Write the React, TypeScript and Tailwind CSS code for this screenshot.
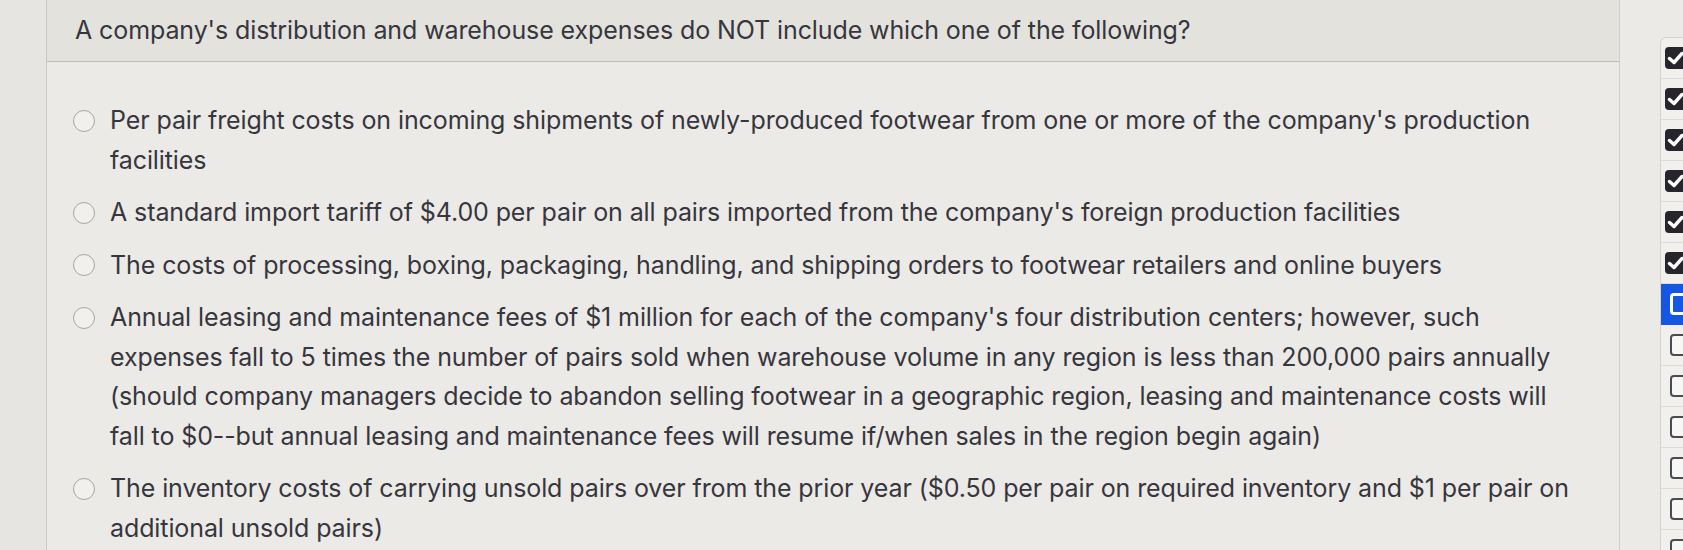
import React from "react";

const options: string[][] = [
  [
    "Per pair freight costs on incoming shipments of newly-produced footwear from one or more of the company's production",
    "facilities",
  ],
  [
    "A standard import tariff of $4.00 per pair on all pairs imported from the company's foreign production facilities",
  ],
  [
    "The costs of processing, boxing, packaging, handling, and shipping orders to footwear retailers and online buyers",
  ],
  [
    "Annual leasing and maintenance fees of $1 million for each of the company's four distribution centers; however, such",
    "expenses fall to 5 times the number of pairs sold when warehouse volume in any region is less than 200,000 pairs annually",
    "(should company managers decide to abandon selling footwear in a geographic region, leasing and maintenance costs will",
    "fall to $0--but annual leasing and maintenance fees will resume if/when sales in the region begin again)",
  ],
  [
    "The inventory costs of carrying unsold pairs over from the prior year ($0.50 per pair on required inventory and $1 per pair on",
    "additional unsold pairs)",
  ],
];

type Status = "done" | "current" | "todo";
const rows: Status[] = [
  "done",
  "done",
  "done",
  "done",
  "done",
  "done",
  "current",
  "todo",
  "todo",
  "todo",
  "todo",
  "todo",
  "todo",
];

function Check() {
  return (
    <svg width="22" height="22" viewBox="0 0 22 22" className="block">
      <rect x="0" y="0" width="22" height="22" rx="4" fill="#26252b" />
      <polyline
        points="4.5,11.5 9,15.5 17,6.5"
        fill="none"
        stroke="#ffffff"
        strokeWidth="3.4"
        strokeLinecap="round"
        strokeLinejoin="round"
      />
    </svg>
  );
}

export default function App() {
  return (
    <div className="w-[1683px] h-[550px] overflow-hidden flex bg-[#ebeae6] text-[#37363e] font-['Inter','Liberation_Sans',sans-serif]">
      <div className="w-[47px] shrink-0 bg-[#e6e5e1] border-r border-[#c9c8c4]" />
      <div className="w-[1573px] shrink-0 flex flex-col border-r border-[#cfceca]">
        <div className="h-[62px] shrink-0 bg-[#e3e2dd] border-b border-[#bebdb8] pl-[28px] flex items-center">
          <span className="text-[25px] tracking-[-0.1px] whitespace-nowrap">
            A company's distribution and warehouse expenses do NOT include which one of the following?
          </span>
        </div>
        <div className="pt-[39px] pl-[26px] flex flex-col gap-[13px]">
          {options.map((lines, i) => (
            <div key={i} className="flex items-start gap-[15px]">
              <div className="h-[39.5px] flex items-center shrink-0">
                <div className="w-[22px] h-[22px] rounded-full border-[1.5px] border-[#a8a7a4] bg-[#f1f0ed]" />
              </div>
              <div className="flex flex-col text-[25px] leading-[39.5px] tracking-[-0.1px]">
                {lines.map((l, j) => (
                  <span key={j} className="whitespace-nowrap">
                    {l}
                  </span>
                ))}
              </div>
            </div>
          ))}
        </div>
      </div>
      <div className="flex-1 min-w-0 flex flex-col">
        <div className="h-[37px] shrink-0" />
        <div className="ml-[40px] flex-1 bg-[#f1f0ed] border-l border-t border-[#d3d2ce] rounded-tl-[6px] overflow-hidden">
          {rows.map((s, i) =>
            s === "current" ? (
              <div
                key={i}
                className="h-[41px] bg-[#1557e3] border-b border-[#1557e3] flex items-center pl-[9px]"
              >
                <div className="w-[22px] h-[22px] shrink-0 rounded-[4px] border-[3px] border-white bg-[#1557e3]" />
              </div>
            ) : (
              <div
                key={i}
                className="h-[41px] border-b border-[#dcdbd7] flex items-center pl-[4px]"
              >
                {s === "done" ? (
                  <div className="shrink-0">
                    <Check />
                  </div>
                ) : (
                  <div className="ml-[5px] w-[22px] h-[22px] shrink-0 rounded-[4px] border-[2px] border-[#4a4a52] bg-[#f7f7f5]" />
                )}
              </div>
            )
          )}
        </div>
      </div>
    </div>
  );
}
